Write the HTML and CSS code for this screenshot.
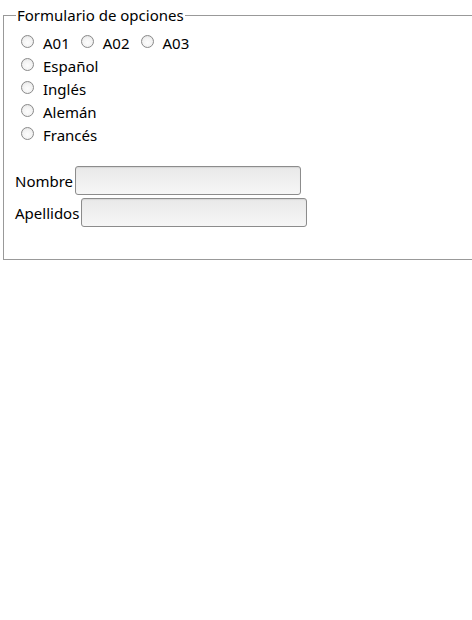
FILE: index.html
```html
<!DOCTYPE html>
<html lang="es">
<head>
<meta charset="utf-8">
<link rel="stylesheet" href="styles.css">
</head>
<body>
<form class="form">
  <fieldset class="panel">
    <legend class="panel-title">Formulario de opciones</legend>
    <div class="options">
      <div class="row">
        <label class="opt"><span class="radio"></span><span class="opt-text">A01</span></label>
        <label class="opt"><span class="radio"></span><span class="opt-text">A02</span></label>
        <label class="opt"><span class="radio"></span><span class="opt-text">A03</span></label>
      </div>
      <div class="row"><label class="opt"><span class="radio"></span><span class="opt-text">Español</span></label></div>
      <div class="row"><label class="opt"><span class="radio"></span><span class="opt-text">Inglés</span></label></div>
      <div class="row"><label class="opt"><span class="radio"></span><span class="opt-text">Alemán</span></label></div>
      <div class="row"><label class="opt"><span class="radio"></span><span class="opt-text">Francés</span></label></div>
    </div>
    <div class="fields">
      <div class="field"><label class="field-label">Nombre</label><span class="input"></span></div>
      <div class="field"><label class="field-label">Apellidos</label><span class="input"></span></div>
    </div>
  </fieldset>
</form>
</body>
</html>
```
FILE: styles.css
```css
html, body {
  margin: 0;
  padding: 0;
  background: #fff;
}
body {
  font-family: "Noto Sans", "DejaVu Sans", sans-serif;
  font-size: 15px;
  color: #000;
}
.form {
  margin: 0;
  padding: 5px 0 0 3px;
}
.panel {
  box-sizing: border-box;
  width: 469px;
  margin: 0;
  padding: 0 0 32px 11px;
  border: 1px solid #999;
  border-right: none;
}
.panel-title {
  padding: 0 1px;
  margin-left: 1px;
  line-height: 20px;
}
.options {
  display: flex;
  flex-direction: column;
  padding-top: 7px;
}
.row {
  display: flex;
  height: 23px;
  align-items: center;
}
.opt {
  display: flex;
  align-items: center;
  margin-right: 5px;
}
.radio {
  width: 11px;
  height: 11px;
  border: 1px solid #8a8a8a;
  border-radius: 50%;
  background: radial-gradient(circle at 50% 60%, #fdfdfd 0%, #f2f2f2 55%, #d8d8d8 100%);
  margin: 0 9px 0 6px;
  position: relative;
  top: -2px;
}
.opt-text {
  line-height: 23px;
}
.fields {
  display: flex;
  flex-direction: column;
  gap: 3px;
  margin-top: 19px;
}
.field {
  display: flex;
  align-items: flex-end;
}
.field-label {
  line-height: 20px;
  padding-bottom: 4px;
  margin-right: 2px;
}
.input {
  width: 224px;
  height: 27px;
  border: 1px solid #8c8c8c;
  border-radius: 3px;
  background: linear-gradient(#e9e9e9, #f6f6f6);
  box-shadow: inset 0 1px 1px rgba(0,0,0,0.08);
}
```
